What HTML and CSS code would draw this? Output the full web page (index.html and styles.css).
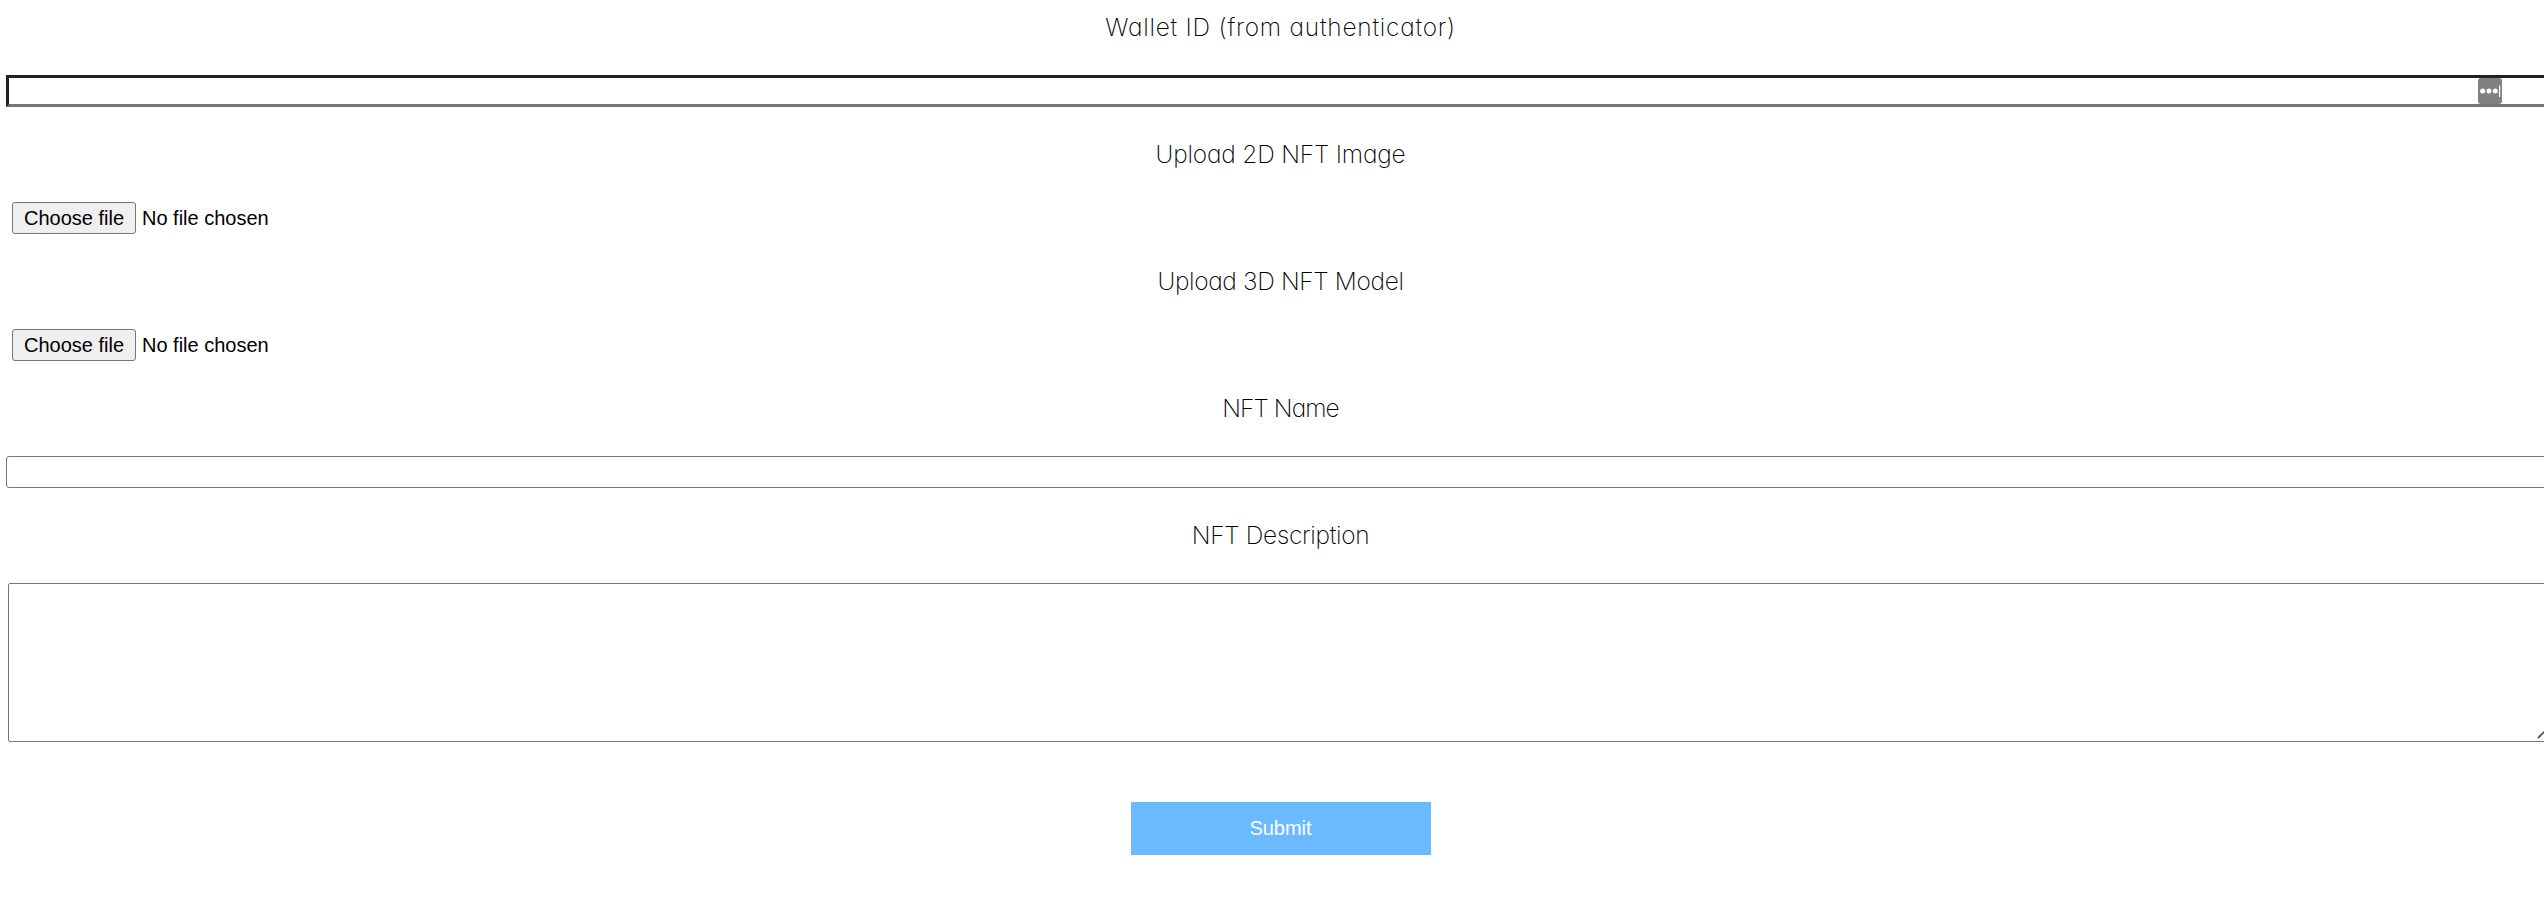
FILE: index.html
```html
<!DOCTYPE html>
<html lang="en">
<head>
<meta charset="utf-8">
<title>NFT Upload</title>
<link rel="stylesheet" href="styles.css">
</head>
<body>
<form class="form">
  <div class="row">
    <label class="label wallet">Wallet ID (from authenticator)</label>
    <div class="field">
      <input class="input inset" type="text">
      <svg class="autofill" width="24" height="26" viewBox="0 0 24 26">
        <rect width="24" height="26" rx="3" fill="#808080"/>
        <circle cx="4.6" cy="13" r="2.5" fill="#fff"/>
        <circle cx="11" cy="13" r="2.5" fill="#fff"/>
        <circle cx="17.3" cy="13" r="2.5" fill="#fff"/>
        <rect x="21" y="7.5" width="1.2" height="11.5" fill="#fff"/>
      </svg>
    </div>
  </div>
  <div class="row">
    <label class="label image">Upload 2D NFT Image</label>
    <div class="file"><button class="choose" type="button">Choose file</button><span>No file chosen</span></div>
  </div>
  <div class="row">
    <label class="label model">Upload 3D NFT Model</label>
    <div class="file"><button class="choose" type="button">Choose file</button><span>No file chosen</span></div>
  </div>
  <div class="row">
    <label class="label name">NFT Name</label>
    <input class="input" type="text">
  </div>
  <div class="row">
    <label class="label desc">NFT Description</label>
    <div class="field">
      <textarea class="area"></textarea>
      <svg class="grip" width="14" height="14" viewBox="0 0 14 14">
        <path d="M1 13L13 1M8 13L13 8" stroke="#555" stroke-width="1.8"/>
      </svg>
    </div>
  </div>
  <button class="submit" type="button">Submit</button>
</form>
</body>
</html>
```
FILE: styles.css
```css
* { box-sizing: border-box; }
html, body { margin: 0; background: #fff; overflow: hidden; }
body { height: 912px; font-family: "Liberation Sans", Arial, sans-serif; font-size: 20px; color: #000; }
.form { width: 2561px; display: flex; flex-direction: column; gap: 20px; }
.row { display: flex; flex-direction: column; }
.label {
  height: 75px;
  padding-top: 8px;
  line-height: 38px;
  text-align: center;
  font-family: Inter, sans-serif;
  font-size: 24.5px;
  font-weight: 150;
  font-feature-settings: "cv11";
  white-space: nowrap;
}
.wallet { letter-spacing: 0.76px; }
.image { letter-spacing: -0.2px; }
.model { letter-spacing: -0.35px; }
.name { letter-spacing: -0.95px; }
.desc { letter-spacing: -0.3px; }
.field { position: relative; display: flex; }
.input { display: block; width: 2548px; height: 32px; margin: 0 6px; padding: 0 4px; border: 1px solid #767676; border-radius: 3px; background: #fff; outline: none; font: inherit; }
.inset { border: 3px solid; border-color: #212121 #767676 #767676 #212121; border-radius: 0; }
.autofill { position: absolute; top: 3px; left: 2478px; }
.file { display: flex; align-items: center; gap: 6px; height: 32px; padding-left: 12px; line-height: 30px; }
.choose { width: 124px; height: 32px; padding: 0; border: 1px solid #767676; border-radius: 3px; background: #efefef; color: #000; font: inherit; }
.area { display: block; width: 2544px; height: 159px; margin: 0 8px; border: 1px solid #767676; border-radius: 2px; resize: none; outline: none; background: #fff; }
.grip { position: absolute; left: 2537px; bottom: 3px; }
.submit { align-self: center; width: 300px; height: 53px; margin-top: 40px; padding: 0; border: 0; background: #6bbaff; color: #fff; font: inherit; }
```
